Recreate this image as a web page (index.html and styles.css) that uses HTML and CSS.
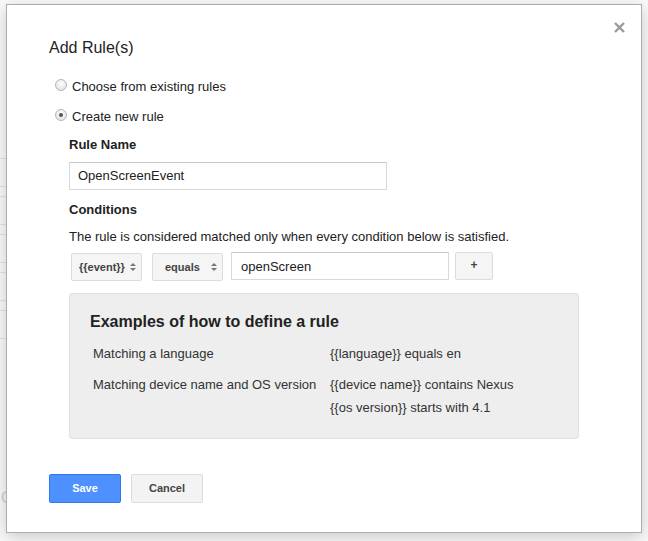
FILE: index.html
```html
<!DOCTYPE html>
<html>
<head>
<meta charset="utf-8">
<title>Add Rule(s)</title>
<link rel="stylesheet" href="styles.css">
</head>
<body>
<div class="page">
  <div class="page-rows">
    <div class="page-row"></div>
    <div class="page-row"></div>
    <div class="page-row"></div>
    <div class="page-row"></div>
    <div class="page-row"></div>
  </div>
  <div class="page-c">C</div>
</div>
<div class="dialog">
  <button class="close" aria-label="Close">
    <svg width="11" height="11" viewBox="0 0 11 11"><path d="M1 1 L10 10 M10 1 L1 10" stroke="#9a9a9a" stroke-width="2.4" fill="none"/></svg>
  </button>
  <h1 class="title">Add Rule(s)</h1>
  <div class="radio-row"><span class="radio"></span><span>Choose from existing rules</span></div>
  <div class="radio-row"><span class="radio checked"></span><span>Create new rule</span></div>
  <div class="section">
    <div class="label label-name">Rule Name</div>
    <div class="text-input name-input">OpenScreenEvent</div>
    <div class="label label-cond">Conditions</div>
    <div class="desc">The rule is considered matched only when every condition below is satisfied.</div>
    <div class="cond-row">
      <div class="select select-var"><span class="sel-text">{{event}}</span><span class="arrows"><i class="up"></i><i class="down"></i></span></div>
      <div class="select select-op"><span class="sel-text">equals</span><span class="arrows"><i class="up"></i><i class="down"></i></span></div>
      <div class="text-input value-input">openScreen</div>
      <div class="plus-btn">+</div>
    </div>
    <div class="examples">
      <div class="ex-title">Examples of how to define a rule</div>
      <div class="ex-grid">
        <div class="ex-name">Matching a language</div>
        <div class="ex-val"><div>{{language}} equals en</div></div>
        <div class="ex-name">Matching device name and OS version</div>
        <div class="ex-val"><div>{{device name}} contains Nexus</div><div>{{os version}} starts with 4.1</div></div>
      </div>
    </div>
  </div>
  <div class="buttons">
    <div class="btn btn-save">Save</div>
    <div class="btn btn-cancel">Cancel</div>
  </div>
</div>
</body>
</html>
```
FILE: styles.css
```css
* { box-sizing: border-box; }
html, body { margin: 0; padding: 0; }
body {
  width: 648px;
  height: 541px;
  overflow: hidden;
  background: #fafafa;
  font-family: "Liberation Sans", Arial, sans-serif;
  color: #222;
  position: relative;
}
.page { padding-top: 158px; }
.page-rows { width: 40px; }
.page-row {
  height: 29px;
  border-top: 1px solid #e4e4e4;
  border-bottom: 1px solid #e4e4e4;
  margin-bottom: 9px;
}
.page-c {
  margin-top: 150px;
  font-size: 16px;
  color: #d0d0d0;
  padding-left: 1px;
}
.dialog {
  position: absolute;
  left: 6px;
  top: 4px;
  width: 636px;
  height: 529px;
  background: #fff;
  border: 1px solid #acacac;
  box-shadow: 0 4px 16px rgba(0,0,0,.2);
  padding: 31px 42px 0;
}
.close {
  position: absolute;
  right: 16px;
  top: 17px;
  width: 11px;
  height: 11px;
  padding: 0;
  border: 0;
  background: none;
  display: block;
}
.close svg { display: block; }
.title {
  margin: 0;
  font-size: 16px;
  font-weight: normal;
  line-height: 24px;
  color: #222;
}
.radio-row {
  display: flex;
  align-items: flex-start;
  font-size: 13px;
  line-height: 16px;
  margin-top: 19px;
}
.radio-row + .radio-row { margin-top: 14px; }
.radio {
  width: 12px;
  height: 12px;
  border-radius: 50%;
  margin: 0 5px 0 6px;
  border: 1px solid #b4b4b4;
  background: radial-gradient(circle at 50% 35%, #fdfdfd 0, #e2e2e2 85%);
  flex: none;
  position: relative;
}
.radio.checked::after {
  content: "";
  position: absolute;
  left: 3px;
  top: 3px;
  width: 4px;
  height: 4px;
  border-radius: 50%;
  background: #555;
}
.section { margin-left: 20px; }
.label {
  font-size: 13px;
  font-weight: bold;
  line-height: 16px;
}
.label-name { margin-top: 12px; }
.text-input {
  height: 28px;
  border: 1px solid #d9d9d9;
  border-top-color: #c8c8c8;
  font-size: 13px;
  line-height: 26px;
  padding: 0 8px;
  background: #fff;
}
.name-input { width: 318px; margin-top: 9px; }
.label-cond { margin-top: 12px; }
.desc {
  font-size: 13px;
  line-height: 16px;
  margin-top: 11px;
}
.cond-row {
  display: flex;
  align-items: flex-start;
  margin-top: 7px;
  margin-left: 2px;
}
.select {
  display: flex;
  align-items: center;
  width: 71px;
  height: 28px;
  margin-top: 1px;
  background: #f5f5f5;
  border: 1px solid #dcdcdc;
  border-radius: 2px;
  font-size: 11px;
  font-weight: bold;
  color: #444;
}
.select-var { padding-left: 7px; margin-right: 10px; }
.select-op { padding-left: 12px; margin-right: 8px; }
.sel-text { flex: 1; }
.arrows {
  display: flex;
  flex-direction: column;
  align-items: center;
  width: 5px;
  margin-right: 6px;
  gap: 2px;
}
.arrows i {
  display: block;
  width: 0;
  height: 0;
  border-left: 3px solid transparent;
  border-right: 3px solid transparent;
}
.arrows .up { border-bottom: 3px solid #777; }
.arrows .down { border-top: 3px solid #777; }
.value-input { width: 218px; padding-left: 9px; line-height: 28px; }
.plus-btn {
  width: 38px;
  height: 28px;
  margin-left: 6px;
  background: #f5f5f5;
  border: 1px solid #dcdcdc;
  border-radius: 2px;
  font-size: 12px;
  font-weight: bold;
  color: #444;
  text-align: center;
  line-height: 25px;
}
.examples {
  margin-top: 12px;
  width: 510px;
  height: 146px;
  background: #eee;
  border: 1px solid #e0e0e0;
  border-radius: 3px;
  padding: 18px 20px 0;
}
.ex-title {
  font-size: 16px;
  font-weight: bold;
  line-height: 20px;
  color: #222;
}
.ex-grid {
  display: grid;
  grid-template-columns: 240px auto;
  margin-top: 6px;
  font-size: 13px;
  line-height: 23px;
  color: #333;
}
.ex-name, .ex-val { padding: 4px 0 4px 3px; }
.ex-val { padding-left: 0; }
.buttons {
  display: flex;
  gap: 10px;
  margin-top: 35px;
}
.btn {
  width: 72px;
  height: 29px;
  border-radius: 2px;
  font-size: 11px;
  font-weight: bold;
  text-align: center;
  line-height: 27px;
}
.btn-save {
  background: #4d90fe;
  border: 1px solid #3079ed;
  color: #fff;
}
.btn-cancel {
  background: #f3f3f3;
  border: 1px solid #dcdcdc;
  color: #444;
}
```
